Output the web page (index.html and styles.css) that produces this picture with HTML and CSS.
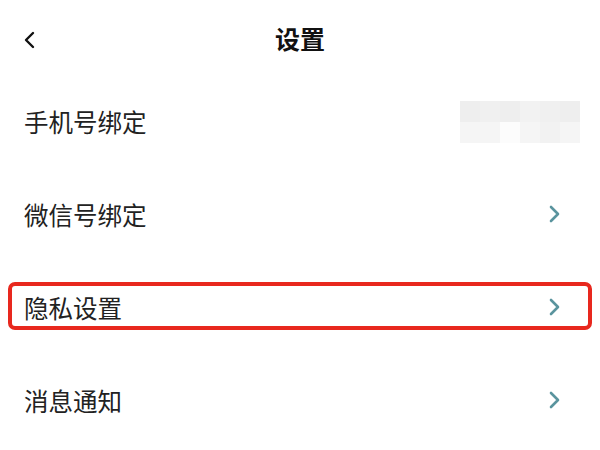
FILE: index.html
```html
<!DOCTYPE html>
<html lang="zh-CN">
<head>
  <meta charset="UTF-8">
  <meta name="viewport" content="width=device-width, initial-scale=1.0">
  <title>设置</title>
  <link rel="stylesheet" href="styles.css">
</head>
<body>
  <header class="topbar">
    <a class="back">
      <svg width="12" height="18" viewBox="0 0 12 18"><polyline points="10,2 3,9 10,16" fill="none" stroke="#111" stroke-width="2.4" stroke-linecap="round" stroke-linejoin="round"/></svg>
    </a>
    <div class="title">设置</div>
  </header>

  <div class="list">
    <div class="row">
      <span class="label">手机号绑定</span>
      <div class="blur">
        <i class="c1"></i><i class="c2"></i><i class="c1"></i><i class="c3"></i><i class="c2"></i><i class="c1"></i>
        <i class="c4"></i><i class="c4"></i><i class="c5"></i><i class="c4"></i><i class="c3"></i><i class="c4"></i>
      </div>
    </div>
    <div class="row">
      <span class="label">微信号绑定</span>
      <svg class="arrow" width="13" height="18" viewBox="0 0 13 18"><polyline points="3,2 10,9 3,16" fill="none" stroke="#5a949e" stroke-width="2.6" stroke-linecap="round" stroke-linejoin="round"/></svg>
    </div>
    <div class="row marked">
      <span class="label">隐私设置</span>
      <svg class="arrow" width="13" height="18" viewBox="0 0 13 18"><polyline points="3,2 10,9 3,16" fill="none" stroke="#5a949e" stroke-width="2.6" stroke-linecap="round" stroke-linejoin="round"/></svg>
    </div>
    <div class="row">
      <span class="label">消息通知</span>
      <svg class="arrow" width="13" height="18" viewBox="0 0 13 18"><polyline points="3,2 10,9 3,16" fill="none" stroke="#5a949e" stroke-width="2.6" stroke-linecap="round" stroke-linejoin="round"/></svg>
    </div>
  </div>
</body>
</html>
```

FILE: styles.css
```css
body {
  margin: 0;
  padding: 0;
  font-family: 'Noto Sans CJK SC', 'Noto Sans', sans-serif;
  background: #fff;
  color: #222;
}

.topbar {
  position: relative;
  height: 76px;
  display: flex;
  align-items: center;
  justify-content: center;
}

.back {
  position: absolute;
  left: 23px;
  top: 31px;
  display: flex;
}

.title {
  font-size: 25px;
  font-weight: bold;
  color: #111;
  line-height: 1;
}

.row {
  position: relative;
  height: 93px;
  display: flex;
  align-items: center;
  justify-content: space-between;
  padding: 0 39px 0 24px;
}

.label {
  font-size: 24.5px;
  line-height: 1;
}

.arrow {
  display: block;
  margin-top: -3px;
}

.marked::after {
  content: '';
  position: absolute;
  left: 8px;
  right: 8px;
  top: 20px;
  height: 40px;
  border: 4px solid #e8281e;
  border-radius: 7px;
}

.blur {
  display: grid;
  grid-template-columns: repeat(6, 20px);
  grid-template-rows: 21px 21px;
  margin-right: -19px;
  margin-top: -1px;
}

.blur i { display: block; }
.blur .c1 { background: #eeeeee; }
.blur .c2 { background: #f0f0f0; }
.blur .c3 { background: #f2f2f2; }
.blur .c4 { background: #f5f5f5; }
.blur .c5 { background: #fcfcfc; }
```
